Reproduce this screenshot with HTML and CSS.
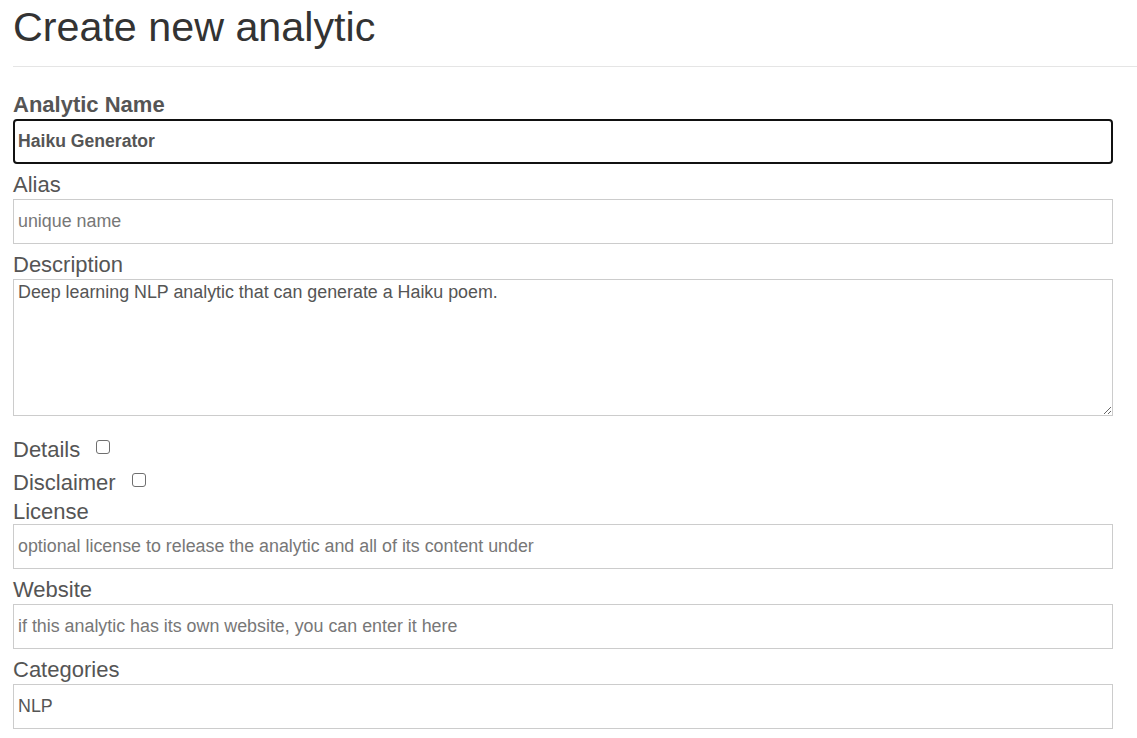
FILE: index.html
```html
<!DOCTYPE html>
<html lang="en">
<head>
<meta charset="utf-8">
<title>Create new analytic</title>
<link rel="stylesheet" href="styles.css">
</head>
<body>
<div class="page">
  <h1 class="title">Create new analytic</h1>
  <hr class="rule">
  <form class="form">
    <label class="label label-strong" for="name">Analytic Name</label>
    <input class="field field-focus" id="name" type="text" value="Haiku Generator">

    <label class="label" for="alias">Alias</label>
    <input class="field" id="alias" type="text" placeholder="unique name">

    <label class="label" for="desc">Description</label>
    <textarea class="area" id="desc">Deep learning NLP analytic that can generate a Haiku poem.</textarea>

    <div class="check-row check-first"><label for="details">Details</label><input class="check" id="details" type="checkbox"></div>
    <div class="check-row check-second"><label for="disclaimer">Disclaimer</label><input class="check" id="disclaimer" type="checkbox"></div>

    <label class="label label-license" for="license">License</label>
    <input class="field" id="license" type="text" placeholder="optional license to release the analytic and all of its content under">

    <label class="label" for="website">Website</label>
    <input class="field" id="website" type="text" placeholder="if this analytic has its own website, you can enter it here">

    <label class="label" for="cats">Categories</label>
    <input class="field" id="cats" type="text" value="NLP">
  </form>
</div>
</body>
</html>
```

FILE: styles.css
```css
html, body {
  margin: 0;
  padding: 0;
  background: #ffffff;
}

body {
  font-family: "Liberation Sans", Arial, sans-serif;
  color: #555555;
}

.page {
  padding-left: 13px;
}

.title {
  margin: 5px 0 0 0;
  font-size: 41.25px;
  line-height: 45px;
  font-weight: 400;
  color: #333333;
}

.rule {
  margin: 16px 0 0 0;
  border: 0;
  border-top: 1px solid #e5e5e5;
  height: 0;
}

.form {
  display: flex;
  flex-direction: column;
  align-items: flex-start;
  padding-top: 25px;
}

.label {
  display: block;
  font-size: 22px;
  line-height: 26px;
  margin: 0 0 1px 0;
  color: #555555;
}

.label-strong {
  font-weight: 700;
}

.label-license {
  line-height: 24px;
  margin-top: 4px;
  margin-bottom: 0;
}

.field {
  box-sizing: border-box;
  width: 1100px;
  height: 45px;
  margin: 0 0 8px 0;
  padding: 0 4px;
  border: 1px solid #cccccc;
  border-radius: 0;
  font-family: "Liberation Sans", Arial, sans-serif;
  font-size: 17.85px;
  color: #555555;
  background: #ffffff;
  outline: none;
}

.field::placeholder {
  color: #777777;
  opacity: 1;
}

.field-focus {
  border: 2px solid #111111;
  border-radius: 4px;
  padding: 0 3px;
  font-weight: 700;
  font-size: 17.6px;
}

.area {
  display: block;
  box-sizing: border-box;
  width: 1100px;
  height: 137px;
  margin: 0;
  padding: 2px 4px;
  border: 1px solid #cccccc;
  font-family: "Liberation Sans", Arial, sans-serif;
  font-size: 17.85px;
  color: #555555;
  resize: vertical;
  outline: none;
}

.check-row {
  font-size: 22px;
  line-height: 26px;
  height: 26px;
  color: #555555;
}

.check-first {
  margin-top: 21px;
}

.check-second {
  margin-top: 7px;
}

.check {
  -webkit-appearance: none;
  appearance: none;
  box-sizing: border-box;
  width: 14px;
  height: 14px;
  margin: 3px 3px 3px 16px;
  border: 1px solid #6f6f6f;
  border-radius: 3px;
  background: #ffffff;
  vertical-align: baseline;
}
```
